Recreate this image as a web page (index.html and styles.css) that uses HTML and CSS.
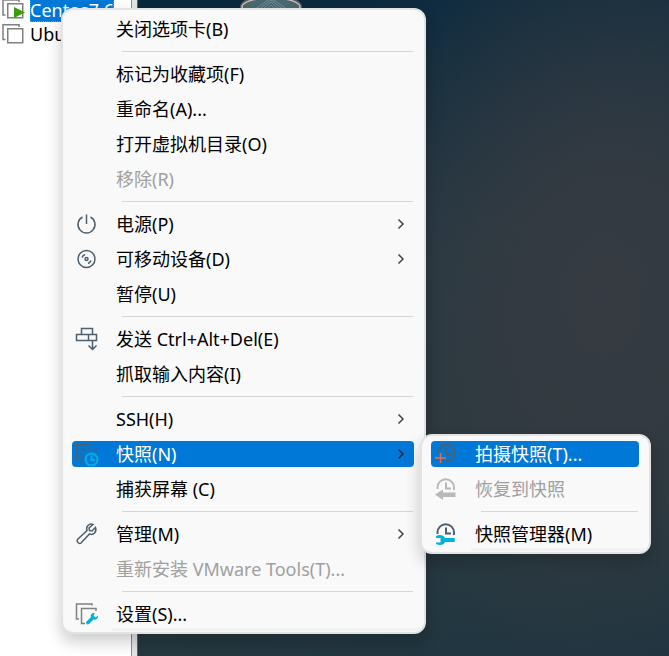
FILE: index.html
```html
<!DOCTYPE html>
<html lang="zh-CN">
<head>
<meta charset="utf-8">
<title>虚拟机</title>
<link rel="stylesheet" href="styles.css">
</head>
<body>
<div class="app">
  <nav class="library">
    <a class="vm" href="#">
      <svg class="vm-icon" width="24" height="22" viewBox="0 0 24 22" fill="none"><path d="M4.500 16H2V1h16v2" stroke="#808080" stroke-width="1.5"/><rect x="6.750" y="4.750" width="15" height="14" fill="#fff" stroke="#808080" stroke-width="1.5"/><path d="M13 8v11l11-5.500z" fill="#3f9c0f"/></svg>
      <span class="vm-name selected">Centos7.6</span>
    </a>
    <a class="vm" href="#">
      <svg class="vm-icon" width="24" height="22" viewBox="0 0 24 22" fill="none"><path d="M4.500 16.500H2V1.750H18V4" stroke="#808080" stroke-width="1.500"/><rect x="6.750" y="5.75" width="15" height="14" stroke="#808080" stroke-width="1.5"/></svg>
      <span class="vm-name">Ubuntu</span>
    </a>
  </nav>
  <div class="splitter"></div>
  <main class="screen">
    <svg class="emblem" width="62" height="10" viewBox="0 0 62 10"><ellipse cx="31" cy="7" rx="29" ry="10" fill="#4a6772" stroke="#5b5b5d" stroke-width="4"/><ellipse cx="31" cy="7" rx="29" ry="9" fill="none" stroke="#c4c0bb" stroke-width="1.500"/><path d="M14 10 31-2 48 10M18 10 31 0 44 10M22 10 31 2 40 10M26 10 31 5 36 10" fill="none" stroke="#6f8f9b"/></svg>
  </main>
</div>

<div class="menu main-menu" role="menu">
  <button class="item" role="menuitem"><span class="label">关闭选项卡(B)</span></button>
  <hr class="rule">
  <button class="item" role="menuitem"><span class="label">标记为收藏项(F)</span></button>
  <button class="item" role="menuitem"><span class="label">重命名(A)...</span></button>
  <button class="item" role="menuitem"><span class="label">打开虚拟机目录(O)</span></button>
  <button class="item" role="menuitem" disabled><span class="label">移除(R)</span></button>
  <hr class="rule">
  <button class="item" role="menuitem">
    <svg class="icon" viewBox="0 0 24 24"><path d="M7.500 5a8.500 8.500 0 1 0 8 0M11.500 2.500v9.500"/></svg>
    <span class="label">电源(P)</span>
    <svg class="arrow" viewBox="0 0 8 12"><path d="M1.500 1.500 6 6l-4.500 4.500"/></svg>
  </button>
  <button class="item" role="menuitem">
    <svg class="icon" viewBox="0 0 24 24"><circle cx="11.500" cy="12" r="8.500"/><circle cx="11.500" cy="12" r="1.500"/><path d="M7 10.500a5 5 0 0 1 3-3M16 13.500a5 5 0 0 1-3 3"/></svg>
    <span class="label">可移动设备(D)</span>
    <svg class="arrow" viewBox="0 0 8 12"><path d="M1.500 1.500 6 6l-4.500 4.500"/></svg>
  </button>
  <button class="item" role="menuitem"><span class="label">暂停(U)</span></button>
  <hr class="rule">
  <button class="item" role="menuitem">
    <svg class="icon" viewBox="0 0 24 24"><path d="M6.500 7V1.500h11V7M1.500 7.500h20v6h-20zM13.500 7.500v6M17.500 13.500V22M13.500 18.500l4 4 4-4"/></svg>
    <span class="label">发送 Ctrl+Alt+Del(E)</span>
  </button>
  <button class="item" role="menuitem"><span class="label">抓取输入内容(I)</span></button>
  <hr class="rule">
  <button class="item" role="menuitem"><span class="label">SSH(H)</span>
    <svg class="arrow" viewBox="0 0 8 12"><path d="M1.500 1.500 6 6l-4.500 4.500"/></svg>
  </button>
  <button class="item active" role="menuitem" aria-haspopup="true" aria-expanded="true">
    <svg class="icon" viewBox="0 0 24 24"><path d="M4 16.500H1.500V2.500H17M9 21.500H6.500V7.500H21V9"/><circle class="backing" cx="16.500" cy="17.500" r="7"/><g class="accent"><circle cx="16.500" cy="17.500" r="6"/><path d="M16.500 13.500v4.500h3.500"/></g></svg>
    <span class="label">快照(N)</span>
    <svg class="arrow" viewBox="0 0 8 12"><path d="M1.500 1.500 6 6l-4.500 4.500"/></svg>
  </button>
  <button class="item" role="menuitem"><span class="label">捕获屏幕 (C)</span></button>
  <hr class="rule">
  <button class="item" role="menuitem">
    <svg class="icon" viewBox="0 0 24 24"><path d="M18 2.500c-4-1.500-7.500 2-6 6L2.500 17.500c-1.500 2 1.500 5 3.500 3.500l8.500-9c4 1.500 7.500-2 6-6.500L17 9l-2.500-.5-.5-2.500z"/></svg>
    <span class="label">管理(M)</span>
    <svg class="arrow" viewBox="0 0 8 12"><path d="M1.500 1.500 6 6l-4.500 4.500"/></svg>
  </button>
  <button class="item" role="menuitem" disabled><span class="label">重新安装 VMware Tools(T)...</span></button>
  <hr class="rule">
  <button class="item" role="menuitem">
    <svg class="icon" viewBox="0 0 24 24"><path class="gray" d="M4 17H1.500V2H17V3.500M10 21.500H6.500V6.500H21V9"/><path class="accent-fill" d="M20 11c-3-.5-5 1.500-4 4l-4.500 4.500c-1.500 1.500 1 4 2.500 2.500l4.500-4.500c2.500 1 5-1 4.500-4L20.500 15.500l-2-2z"/></svg>
    <span class="label">设置(S)...</span>
  </button>
</div>

<div class="menu sub-menu" role="menu">
  <button class="item active" role="menuitem">
    <svg class="icon" viewBox="0 0 24 24"><path class="thick" d="M4 12V11a8.500 8.500 0 1 1 8.500 8.500H11M12.500 6v6.500h5"/><path class="plus" d="M6.500 11v10M1 16h11"/></svg>
    <span class="label">拍摄快照(T)...</span>
  </button>
  <button class="item" role="menuitem" disabled>
    <svg class="icon" viewBox="0 0 24 24"><path class="thick" d="M3.500 12V10.500a8 8 0 0 1 16.500 0V13M12 5.500v6h5"/><path class="solid" d="M1 17.500 9 12.500v3h12.500v4.500H9v3z"/></svg>
    <span class="label">恢复到快照</span>
  </button>
  <hr class="rule">
  <button class="item" role="menuitem">
    <svg class="icon" viewBox="0 0 24 24"><path class="thick" d="M3.500 12V10.500a8 8 0 0 1 16.500 0V13M12 5.500v6h5"/><path class="accent-fill" d="M2 14c4-2 8-.5 9 2h9.500q1 2 0 4H11c-1 3-5 4-9 2v-1.500h4.500v-4.500H2z"/></svg>
    <span class="label">快照管理器(M)</span>
  </button>
</div>
</body>
</html>
```
FILE: styles.css
```css
* { box-sizing: border-box; }

body {
  margin: 0;
  font: 18px/24px "Noto Sans", "Noto Sans CJK SC", sans-serif;
  color: #000;
  overflow: hidden;
}

.app { display: flex; height: 100vh; }

.library {
  width: 131px;
  padding-left: 1px;
  background: #fff;
}

.vm {
  display: flex;
  align-items: center;
  gap: 5px;
  height: 28px;
  color: #000;
  text-decoration: none;
}
.vm:first-child { height: 20px; }
.vm-icon { flex: none; overflow: visible; }
.vm-name.selected {
  background: #0078d7;
  color: #fff;
  outline: 1px dotted #e08020;
  outline-offset: -1px;
}

.splitter {
  width: 7px;
  background: #e4e4e6;
  border-left: 1px solid #8a8d94;
  border-right: 1px solid #5a626c;
}

.screen {
  flex: 1;
  background:
    radial-gradient(ellipse 260px 400px at 88% 46%, #363b42 0%, rgba(54, 58, 65, .8) 35%, rgba(48, 57, 63, 0) 100%),
    linear-gradient(165deg, #08283e 0%, #152f40 20%, #263a43 42%, #29393f 65%, #243840 84%, #1e3440 100%);
}
.emblem { display: block; margin-left: 102px; }

.menu {
  position: absolute;
  padding-top: 2px;
  border: 2px solid #e2e3e4;
  border-radius: 12px;
  background: #f9f9f9;
  box-shadow: 0 8px 16px rgba(0, 0, 0, .2);
}
.menu::after {
  content: "";
  position: absolute;
  left: 49px;
  right: 4px;
  bottom: 1px;
  height: 3px;
  background: #f2f2f2;
}
.main-menu { left: 61px; top: 8px; width: 365px; }
.sub-menu { left: 420px; top: 434px; width: 231px; padding-top: 1px; }

.item {
  position: relative;
  display: flex;
  align-items: center;
  width: 100%;
  height: 35px;
  padding: 0 19px 1px 53px;
  border: 0;
  background: none;
  color: #000;
  font: inherit;
  text-align: left;
}
.item:disabled { color: #a0a0a0; }
.item.active { color: #fff; }
.item.active::before {
  content: "";
  position: absolute;
  inset: 4px 10px 5px 9px;
  border-radius: 4px;
  background: #0078d7;
}
.label { position: relative; flex: 1; white-space: nowrap; }

.icon {
  position: absolute;
  left: 12px;
  top: 5px;
  width: 24px;
  height: 24px;
  fill: none;
  stroke: #4e5f6d;
  stroke-width: 1.5;
}
.thick { stroke-width: 2; }
.gray { stroke: #808080; }
.backing { fill: #0078d7; stroke: none; }
.accent { stroke: #00b0dc; stroke-width: 2; }
.accent-fill { fill: #00b4d8; stroke: none; }
.plus { stroke: #f26a3c; stroke-width: 1.5; }
.solid { fill: #b8b8b8; stroke: none; }
.item:disabled .icon { stroke: #b8b8b8; }

.arrow {
  position: relative;
  width: 8px;
  height: 12px;
  fill: none;
  stroke: #444;
  stroke-width: 1.5;
}
.item.active .arrow { stroke: #1a2a3a; }

.rule {
  height: 1px;
  margin: 4px 11px 5px 59px;
  border: 0;
  background: #d5d5d5;
}
```
